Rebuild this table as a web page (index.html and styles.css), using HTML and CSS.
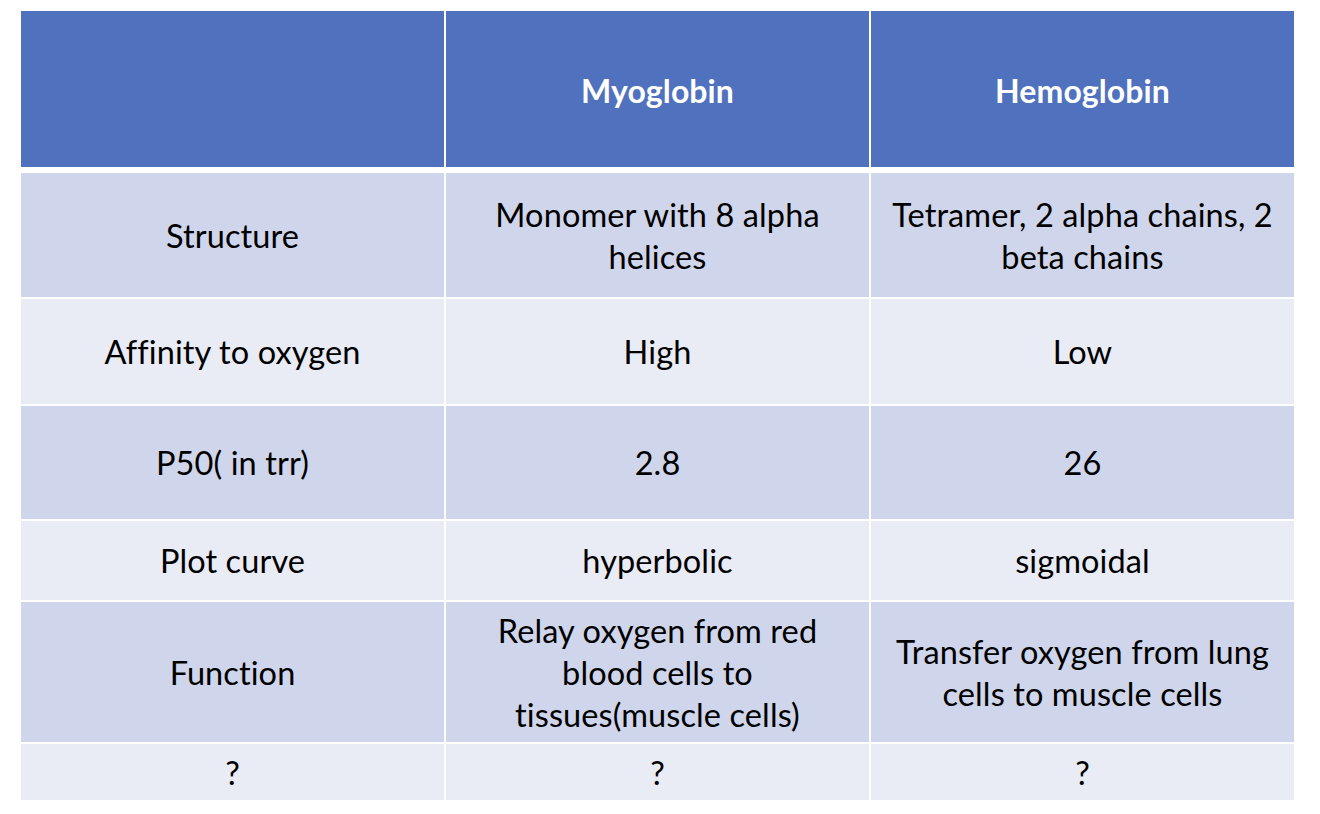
FILE: index.html
```html
<!DOCTYPE html>
<html>
<head>
<meta charset="utf-8">
<link rel="stylesheet" href="styles.css">
</head>
<body>
<div class="table">
  <div class="cell head"></div>
  <div class="cell head">Myoglobin</div>
  <div class="cell head">Hemoglobin</div>

  <div class="cell dark r1">Structure</div>
  <div class="cell dark r1">Monomer with 8 alpha<br>helices</div>
  <div class="cell dark r1">Tetramer, 2 alpha chains, 2<br>beta chains</div>

  <div class="cell light">Affinity to oxygen</div>
  <div class="cell light">High</div>
  <div class="cell light">Low</div>

  <div class="cell dark">P50( in trr)</div>
  <div class="cell dark">2.8</div>
  <div class="cell dark">26</div>

  <div class="cell light">Plot curve</div>
  <div class="cell light">hyperbolic</div>
  <div class="cell light">sigmoidal</div>

  <div class="cell dark">Function</div>
  <div class="cell dark">Relay oxygen from red<br>blood cells to<br>tissues(muscle cells)</div>
  <div class="cell dark">Transfer oxygen from lung<br>cells to muscle cells</div>

  <div class="cell light">?</div>
  <div class="cell light">?</div>
  <div class="cell light">?</div>
</div>
</body>
</html>
```

FILE: styles.css
```css
html, body {
  margin: 0;
  padding: 0;
  background: #ffffff;
}

body {
  padding: 11px 0 0 21px;
  font-family: Lato, "Open Sans", sans-serif;
  color: #000;
}

.table {
  display: grid;
  grid-template-columns: 423px 423px 423px;
  grid-template-rows: 160px 124px 105px 113px 79px 140px 56px;
  column-gap: 2px;
  row-gap: 2px;
  width: 1273px;
}

.cell {
  display: flex;
  align-items: center;
  justify-content: center;
  text-align: center;
  font-size: 32.5px;
  line-height: 42px;
  padding-top: 1px;
  box-sizing: border-box;
  letter-spacing: 0.1px;
}

.head {
  background: #4f71be;
  color: #ffffff;
  font-weight: 700;
  font-size: 32px;
  margin-bottom: 4px;
  padding-top: 4px;
}

.dark {
  background: #cfd5ea;
}

.light {
  background: #e9ebf5;
}
```
